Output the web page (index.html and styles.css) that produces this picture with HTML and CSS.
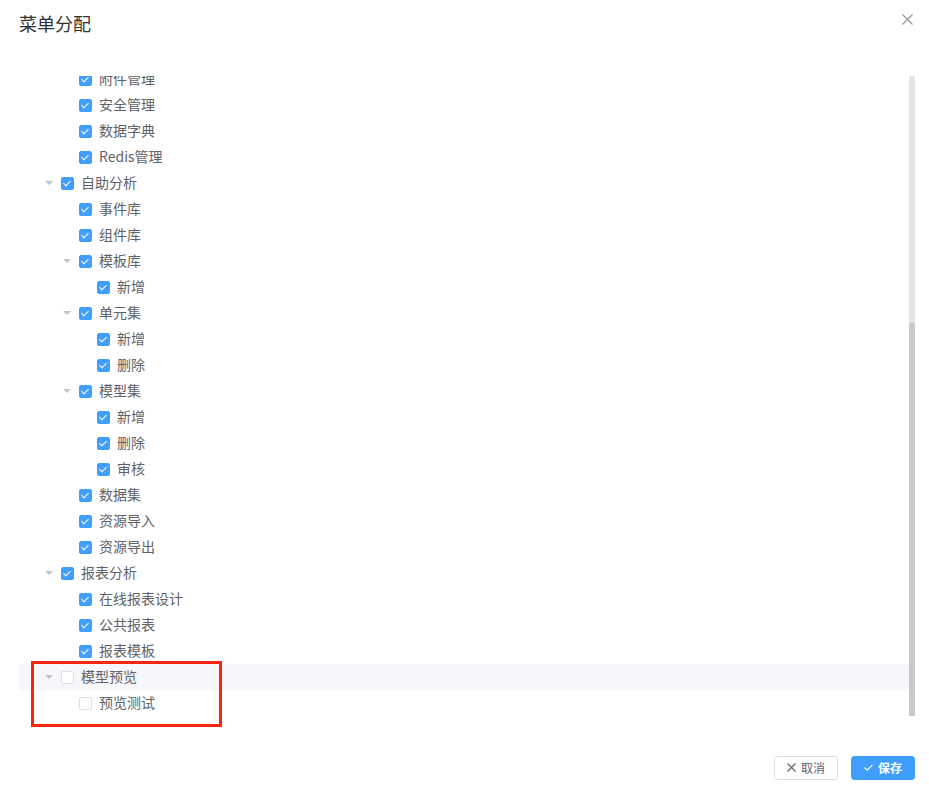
FILE: index.html
```html
<!DOCTYPE html>
<html lang="zh-CN">
<head>
    <meta charset="UTF-8">
    <title>菜单分配</title>
    <link rel="stylesheet" href="styles.css">
</head>
<body>
    <div class="dialog">
        <div class="dialog-header">
            <span class="dialog-title">菜单分配</span>
            <span class="dialog-close">
                <svg width="11" height="11" viewBox="0 0 11 11"><path d="M0.5 0.5L10.5 10.5M10.5 0.5L0.5 10.5" stroke="#909399" stroke-width="1.1" fill="none"/></svg>
            </span>
        </div>

        <div class="tree-area">
            <div class="tree">
                <div class="tree-inner">
                    <div class="node lv2"><span class="caret leaf"></span><span class="cb on"></span><span class="label">附件管理</span></div>
                    <div class="node lv2"><span class="caret leaf"></span><span class="cb on"></span><span class="label">安全管理</span></div>
                    <div class="node lv2"><span class="caret leaf"></span><span class="cb on"></span><span class="label">数据字典</span></div>
                    <div class="node lv2"><span class="caret leaf"></span><span class="cb on"></span><span class="label">Redis管理</span></div>
                    <div class="node lv1"><span class="caret"></span><span class="cb on"></span><span class="label">自助分析</span></div>
                    <div class="node lv2"><span class="caret leaf"></span><span class="cb on"></span><span class="label">事件库</span></div>
                    <div class="node lv2"><span class="caret leaf"></span><span class="cb on"></span><span class="label">组件库</span></div>
                    <div class="node lv2"><span class="caret"></span><span class="cb on"></span><span class="label">模板库</span></div>
                    <div class="node lv3"><span class="caret leaf"></span><span class="cb on"></span><span class="label">新增</span></div>
                    <div class="node lv2"><span class="caret"></span><span class="cb on"></span><span class="label">单元集</span></div>
                    <div class="node lv3"><span class="caret leaf"></span><span class="cb on"></span><span class="label">新增</span></div>
                    <div class="node lv3"><span class="caret leaf"></span><span class="cb on"></span><span class="label">删除</span></div>
                    <div class="node lv2"><span class="caret"></span><span class="cb on"></span><span class="label">模型集</span></div>
                    <div class="node lv3"><span class="caret leaf"></span><span class="cb on"></span><span class="label">新增</span></div>
                    <div class="node lv3"><span class="caret leaf"></span><span class="cb on"></span><span class="label">删除</span></div>
                    <div class="node lv3"><span class="caret leaf"></span><span class="cb on"></span><span class="label">审核</span></div>
                    <div class="node lv2"><span class="caret leaf"></span><span class="cb on"></span><span class="label">数据集</span></div>
                    <div class="node lv2"><span class="caret leaf"></span><span class="cb on"></span><span class="label">资源导入</span></div>
                    <div class="node lv2"><span class="caret leaf"></span><span class="cb on"></span><span class="label">资源导出</span></div>
                    <div class="node lv1"><span class="caret"></span><span class="cb on"></span><span class="label">报表分析</span></div>
                    <div class="node lv2"><span class="caret leaf"></span><span class="cb on"></span><span class="label">在线报表设计</span></div>
                    <div class="node lv2"><span class="caret leaf"></span><span class="cb on"></span><span class="label">公共报表</span></div>
                    <div class="node lv2"><span class="caret leaf"></span><span class="cb on"></span><span class="label">报表模板</span></div>
                    <div class="node lv1 current"><span class="caret"></span><span class="cb"></span><span class="label">模型预览</span></div>
                    <div class="node lv2"><span class="caret leaf"></span><span class="cb"></span><span class="label">预览测试</span></div>
                </div>
            </div>
            <div class="scrollbar"><div class="thumb"></div></div>
        </div>

        <div class="dialog-footer">
            <button type="button" class="btn">
                <svg width="9" height="9" viewBox="0 0 9 9"><path d="M0.5 0.5L8.5 8.5M8.5 0.5L0.5 8.5" stroke="#606266" stroke-width="1.1" fill="none"/></svg>
                取消
            </button>
            <button type="button" class="btn btn-primary">
                <svg width="9" height="7" viewBox="0 0 9 7"><path d="M0.5 3.5L3.3 6.2L8.5 0.8" stroke="#fff" stroke-width="1.1" fill="none"/></svg>
                保存
            </button>
        </div>

        <div class="mark"></div>
    </div>
</body>
</html>
```

FILE: styles.css
```css
body {
    margin: 0;
    background: #fff;
    font-family: "Noto Sans CJK SC", "Liberation Sans", sans-serif;
    color: #606266;
}
.dialog {
    position: relative;
    width: 929px;
    height: 797px;
}
.dialog-header {
    display: flex;
    justify-content: space-between;
    padding: 11px 16px 0 19px;
    height: 25px;
}
.dialog-title {
    font-size: 18px;
    line-height: 24px;
    color: #303133;
}
.dialog-close {
    display: flex;
    margin-top: 3px;
    height: 11px;
}
.tree-area {
    display: flex;
    margin: 40px 14px 0 19px;
    height: 640px;
}
.tree {
    flex: 1;
    overflow: hidden;
}
.tree-inner {
    margin-top: -10px;
}
.scrollbar {
    width: 6px;
    margin-left: 1px;
    background: #e6e6e6;
    display: flex;
    flex-direction: column;
    justify-content: flex-end;
}
.thumb {
    height: 394px;
    background: #c9c9c9;
    border-radius: 2px;
}
.node {
    display: flex;
    align-items: center;
    height: 26px;
    font-size: 14px;
}
.node.current {
    background: #f5f7fa;
}
.lv1 { padding-left: 18px; }
.lv2 { padding-left: 36px; }
.lv3 { padding-left: 54px; }
.caret {
    width: 24px;
    height: 26px;
    display: flex;
    align-items: center;
    justify-content: center;
}
.caret::before {
    content: "";
    border-left: 4px solid transparent;
    border-right: 4px solid transparent;
    border-top: 4px solid #c0c4cc;
}
.caret.leaf::before {
    border-top-color: transparent;
}
.cb {
    position: relative;
    width: 11px;
    height: 11px;
    border: 1px solid #dcdfe6;
    border-radius: 2px;
    background: #fff;
    margin-right: 7px;
}
.cb.on {
    background: #409eff;
    border-color: #409eff;
}
.cb.on::after {
    content: "";
    position: absolute;
    left: 3px;
    top: 1px;
    width: 3px;
    height: 6px;
    border: 1px solid #fff;
    border-left: 0;
    border-top: 0;
    transform: rotate(45deg);
}
.label {
    line-height: 24px;
    padding-bottom: 2px;
}
.dialog-footer {
    display: flex;
    justify-content: flex-end;
    gap: 13px;
    margin: 40px 14px 0 0;
}
.btn {
    display: flex;
    align-items: center;
    gap: 5px;
    height: 24px;
    padding: 0 12px 1px;
    border: 1px solid #dcdfe6;
    border-radius: 3px;
    background: #fff;
    color: #606266;
    font-family: inherit;
    font-size: 12px;
    cursor: pointer;
}
.btn-primary {
    background: #409eff;
    border-color: #409eff;
    color: #fff;
    font-weight: bold;
}
.mark {
    position: absolute;
    left: 31px;
    top: 661px;
    width: 185px;
    height: 60px;
    border: 3px solid #f7260d;
}
```
